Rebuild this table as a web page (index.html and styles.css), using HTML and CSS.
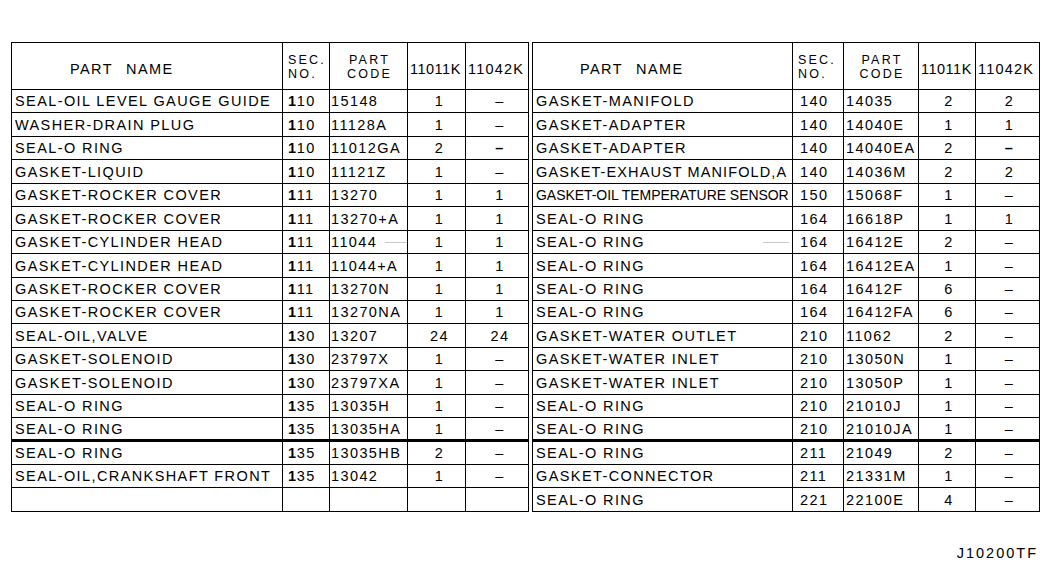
FILE: index.html
```html
<!DOCTYPE html>
<html lang="en">
<head>
<meta charset="utf-8">
<title>Parts list</title>
<link rel="stylesheet" href="styles.css">
</head>
<body>
<div class="sheet">
  <div class="tables">
    <div class="grid grid-left">
      <div class="row head">
        <div class="c name-h name-h-left">PART NAME</div>
        <div class="c sec-h"><span>SEC.</span><span>NO.</span></div>
        <div class="c code-h"><span>PART</span><span>CODE</span></div>
        <div class="c qty-h q1">11011K</div>
        <div class="c qty-h q2">11042K</div>
      </div>
      <div class="row"><div class="c name">SEAL-OIL LEVEL GAUGE GUIDE</div><div class="c sec"><b>1</b>10</div><div class="c code">15148</div><div class="c qty">1</div><div class="c qty">–</div></div>
      <div class="row"><div class="c name">WASHER-DRAIN PLUG</div><div class="c sec"><b>1</b>10</div><div class="c code">11128A</div><div class="c qty">1</div><div class="c qty">–</div></div>
      <div class="row"><div class="c name">SEAL-O RING</div><div class="c sec"><b>1</b>10</div><div class="c code">11012GA</div><div class="c qty">2</div><div class="c qty"><b>–</b></div></div>
      <div class="row"><div class="c name">GASKET-LIQUID</div><div class="c sec"><b>1</b>10</div><div class="c code">11121Z</div><div class="c qty">1</div><div class="c qty">–</div></div>
      <div class="row"><div class="c name">GASKET-ROCKER COVER</div><div class="c sec"><b>1</b>11</div><div class="c code">13270</div><div class="c qty">1</div><div class="c qty">1</div></div>
      <div class="row"><div class="c name">GASKET-ROCKER COVER</div><div class="c sec"><b>1</b>11</div><div class="c code">13270+A</div><div class="c qty">1</div><div class="c qty">1</div></div>
      <div class="row"><div class="c name">GASKET-CYLINDER HEAD</div><div class="c sec"><b>1</b>11</div><div class="c code">11044<span class="smudge"></span></div><div class="c qty">1</div><div class="c qty">1</div></div>
      <div class="row"><div class="c name">GASKET-CYLINDER HEAD</div><div class="c sec"><b>1</b>11</div><div class="c code">11044+A</div><div class="c qty">1</div><div class="c qty">1</div></div>
      <div class="row"><div class="c name">GASKET-ROCKER COVER</div><div class="c sec"><b>1</b>11</div><div class="c code">13270N</div><div class="c qty">1</div><div class="c qty">1</div></div>
      <div class="row"><div class="c name">GASKET-ROCKER COVER</div><div class="c sec"><b>1</b>11</div><div class="c code">13270NA</div><div class="c qty">1</div><div class="c qty">1</div></div>
      <div class="row"><div class="c name">SEAL-OIL,VALVE</div><div class="c sec"><b>1</b>30</div><div class="c code">13207</div><div class="c qty">24</div><div class="c qty">24</div></div>
      <div class="row"><div class="c name">GASKET-SOLENOID</div><div class="c sec"><b>1</b>30</div><div class="c code">23797X</div><div class="c qty">1</div><div class="c qty">–</div></div>
      <div class="row"><div class="c name">GASKET-SOLENOID</div><div class="c sec"><b>1</b>30</div><div class="c code">23797XA</div><div class="c qty">1</div><div class="c qty">–</div></div>
      <div class="row"><div class="c name">SEAL-O RING</div><div class="c sec"><b>1</b>35</div><div class="c code">13035H</div><div class="c qty">1</div><div class="c qty">–</div></div>
      <div class="row thick"><div class="c name">SEAL-O RING</div><div class="c sec"><b>1</b>35</div><div class="c code">13035HA</div><div class="c qty">1</div><div class="c qty">–</div></div>
      <div class="row"><div class="c name">SEAL-O RING</div><div class="c sec"><b>1</b>35</div><div class="c code">13035HB</div><div class="c qty">2</div><div class="c qty">–</div></div>
      <div class="row"><div class="c name">SEAL-OIL,CRANKSHAFT FRONT</div><div class="c sec"><b>1</b>35</div><div class="c code">13042</div><div class="c qty">1</div><div class="c qty">–</div></div>
      <div class="row"><div class="c name"></div><div class="c sec"></div><div class="c code"></div><div class="c qty"></div><div class="c qty"></div></div>
    </div>

    <div class="grid grid-right">
      <div class="row head">
        <div class="c name-h name-h-right">PART NAME</div>
        <div class="c sec-h"><span>SEC.</span><span>NO.</span></div>
        <div class="c code-h"><span>PART</span><span>CODE</span></div>
        <div class="c qty-h q1">11011K</div>
        <div class="c qty-h q2">11042K</div>
      </div>
      <div class="row"><div class="c name">GASKET-MANIFOLD</div><div class="c sec">140</div><div class="c code">14035</div><div class="c qty">2</div><div class="c qty">2</div></div>
      <div class="row"><div class="c name">GASKET-ADAPTER</div><div class="c sec">140</div><div class="c code">14040E</div><div class="c qty">1</div><div class="c qty">1</div></div>
      <div class="row"><div class="c name">GASKET-ADAPTER</div><div class="c sec">140</div><div class="c code">14040EA</div><div class="c qty">2</div><div class="c qty"><b>–</b></div></div>
      <div class="row"><div class="c name snug">GASKET-EXHAUST MANIFOLD,A</div><div class="c sec">140</div><div class="c code">14036M</div><div class="c qty">2</div><div class="c qty">2</div></div>
      <div class="row"><div class="c name tight">GASKET-OIL TEMPERATURE SENSOR</div><div class="c sec">150</div><div class="c code">15068F</div><div class="c qty">1</div><div class="c qty">–</div></div>
      <div class="row"><div class="c name">SEAL-O RING</div><div class="c sec">164</div><div class="c code">16618P</div><div class="c qty">1</div><div class="c qty">1</div></div>
      <div class="row"><div class="c name">SEAL-O RING<span class="smudge smudge-r"></span></div><div class="c sec">164</div><div class="c code">16412E</div><div class="c qty">2</div><div class="c qty">–</div></div>
      <div class="row"><div class="c name">SEAL-O RING</div><div class="c sec">164</div><div class="c code">16412EA</div><div class="c qty">1</div><div class="c qty">–</div></div>
      <div class="row"><div class="c name">SEAL-O RING</div><div class="c sec">164</div><div class="c code">16412F</div><div class="c qty">6</div><div class="c qty">–</div></div>
      <div class="row"><div class="c name">SEAL-O RING</div><div class="c sec">164</div><div class="c code">16412FA</div><div class="c qty">6</div><div class="c qty">–</div></div>
      <div class="row"><div class="c name">GASKET-WATER OUTLET</div><div class="c sec">210</div><div class="c code">11062</div><div class="c qty">2</div><div class="c qty">–</div></div>
      <div class="row"><div class="c name">GASKET-WATER INLET</div><div class="c sec">210</div><div class="c code">13050N</div><div class="c qty">1</div><div class="c qty">–</div></div>
      <div class="row"><div class="c name">GASKET-WATER INLET</div><div class="c sec">210</div><div class="c code">13050P</div><div class="c qty">1</div><div class="c qty">–</div></div>
      <div class="row"><div class="c name">SEAL-O RING</div><div class="c sec">210</div><div class="c code">21010J</div><div class="c qty">1</div><div class="c qty">–</div></div>
      <div class="row thick"><div class="c name">SEAL-O RING</div><div class="c sec">210</div><div class="c code">21010JA</div><div class="c qty">1</div><div class="c qty">–</div></div>
      <div class="row"><div class="c name">SEAL-O RING</div><div class="c sec">211</div><div class="c code">21049</div><div class="c qty">2</div><div class="c qty">–</div></div>
      <div class="row"><div class="c name">GASKET-CONNECTOR</div><div class="c sec">211</div><div class="c code">21331M</div><div class="c qty">1</div><div class="c qty">–</div></div>
      <div class="row"><div class="c name">SEAL-O RING</div><div class="c sec">221</div><div class="c code">22100E</div><div class="c qty">4</div><div class="c qty">–</div></div>
    </div>
  </div>
  <div class="drawing-no">J10200TF</div>
</div>
</body>
</html>
```

FILE: styles.css
```css
html, body {
  margin: 0;
  padding: 0;
  background: #fff;
}

body {
  font-family: "Liberation Sans", Arial, sans-serif;
  color: #000;
  font-size: 14.5px;
  letter-spacing: 1.4px;
}

.sheet {
  padding: 42px 0 0 11px;
  width: 1034px;
}

.tables {
  display: flex;
  gap: 3px;
  align-items: flex-start;
}

.grid {
  display: grid;
  grid-template-rows: 47px repeat(18, 23.44px);
  border-left: 1px solid #000;
  border-top: 1px solid #000;
}

.grid-left {
  grid-template-columns: 271px 47px 78px 58px 63px;
}

.grid-right {
  grid-template-columns: 260px 51px 75px 57px 64px;
}

.row {
  display: contents;
}

.c {
  box-sizing: border-box;
  border-right: 1px solid #000;
  border-bottom: 1px solid #000;
  display: flex;
  align-items: center;
  white-space: nowrap;
  overflow: visible;
  line-height: 1;
  padding-top: 1px;
}

.row.thick .c {
  border-bottom: 3px solid #000;
}

.name {
  padding-left: 3px;
}

.snug {
  letter-spacing: 1.1px;
}

.tight {
  font-size: 14px;
  letter-spacing: -0.05px;
}

.sec {
  padding-left: 5px;
}

.grid-right .sec {
  padding-left: 7px;
}

.sec b {
  font-weight: bold;
  letter-spacing: 0.6px;
}

.code {
  padding-left: 1px;
}

.grid-right .code {
  padding-left: 2px;
}

.qty {
  justify-content: center;
  padding-left: 6px;
}

.grid-right .qty {
  padding-left: 4px;
}

.qty b {
  font-weight: bold;
}

/* header */
.name-h {
  word-spacing: 8px;
  padding-top: 6px;
}

.name-h-left {
  padding-left: 58px;
}

.name-h-right {
  padding-left: 47px;
}

.sec-h,
.code-h {
  flex-direction: column;
  justify-content: center;
  font-size: 12.5px;
  line-height: 14.5px;
  padding-top: 2px;
}

.sec-h {
  align-items: flex-start;
  padding-left: 5px;
  letter-spacing: 2.2px;
}

.code-h {
  align-items: center;
  letter-spacing: 2.2px;
  padding-left: 2px;
}

.qty-h {
  padding-top: 6px;
  padding-left: 2px;
}

.q1 {
  letter-spacing: 0.5px;
}

.q2 {
  letter-spacing: 1.2px;
}

.smudge {
  display: inline-block;
  width: 26px;
  height: 1px;
  background: #c8c8c8;
  margin-left: 8px;
  vertical-align: middle;
}

.smudge-r {
  margin-left: 118px;
}

.drawing-no {
  text-align: right;
  padding-right: 7px;
  margin-top: 33px;
  letter-spacing: 2px;
}
```
